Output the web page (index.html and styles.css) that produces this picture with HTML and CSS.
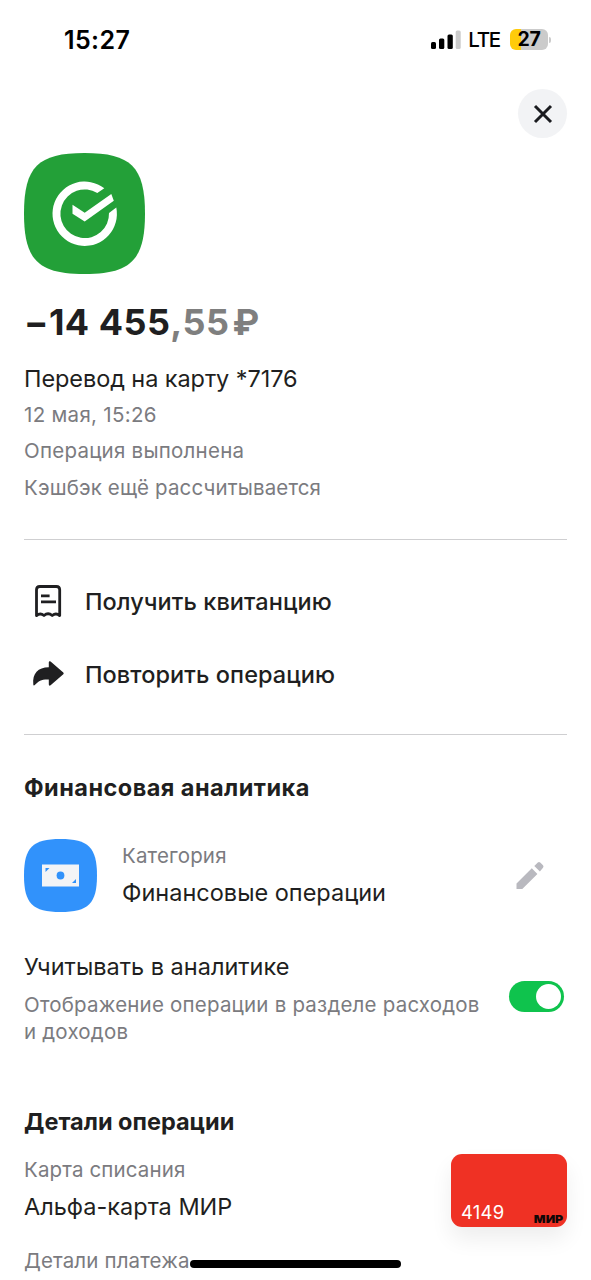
FILE: index.html
```html
<!DOCTYPE html>
<html lang="ru">
<head>
<meta charset="utf-8">
<title>Перевод на карту</title>
<link rel="stylesheet" href="styles.css">
</head>
<body>
<div class="screen">
  <header class="status">
    <span class="clock">15:27</span>
    <div class="status-right">
      <svg class="signal" width="30" height="20" viewBox="0 0 30 20"><rect x="0" y="12" width="5" height="7" rx="1.5"/><rect x="8" y="8.5" width="5.3" height="10.5" rx="1.5"/><rect x="16.5" y="4.5" width="5.3" height="14.5" rx="1.5"/><rect x="24.7" y="0.5" width="5" height="18.5" rx="1.5" fill="#cbcbcb"/></svg>
      <span class="network">LTE</span>
      <div class="battery"><span class="battery-level">27</span></div>
      <span class="battery-tip"></span>
    </div>
  </header>
  <div class="toolbar">
    <button class="close" aria-label="Закрыть"><svg width="20" height="20" viewBox="0 0 20 20"><path d="M2 2 18 18M18 2 2 18" stroke="#1a1b1f" stroke-width="3" fill="none"/></svg></button>
  </div>
  <main>
    <section class="summary">
      <svg class="merchant" width="121" height="121" viewBox="0 0 121 121">
        <path d="M0 60.5C0 14 14 0 60.5 0S121 14 121 60.5 107 121 60.5 121 0 107 0 60.5Z" fill="#23a038"/>
        <path d="M80.3 35.2A32.2 32.2 0 1 0 92.3 54.500L85 60A24.300 24.300 0 1 1 73.300 40Z" fill="#fff"/>
        <path d="M48.500 51.700 60.700 59.700 87.300 40.900 89.800 47.700 60.700 68.500 48.500 60.700Z" fill="#fff"/>
      </svg>
      <p class="amount"><span>−14 455</span><span class="cents">,55</span><span class="cents rub">₽</span></p>
      <h1 class="text title">Перевод на карту *7176</h1>
      <p class="meta date">12 мая, 15:26</p>
      <p class="meta status-line">Операция выполнена</p>
      <p class="meta">Кэшбэк ещё рассчитывается</p>
    </section>
    <section class="actions">
      <a class="action"><svg width="48" height="48" viewBox="0 0 48 48"><path d="M12.500 38.600V12.800Q12.500 9.500 15.800 9.500H32.400Q35.700 9.500 35.700 12.800V38.600Q32 35.300 28.200 38.500 24.100 35 20 38.500 16.200 35.300 12.500 38.600Z" fill="none" stroke="#1f1f21" stroke-width="2.800" stroke-linejoin="round"/><path d="M17 18.800h8.600M17 24.900H32" stroke="#1f1f21" stroke-width="2.800"/></svg>Получить квитанцию</a>
      <a class="action"><svg width="48" height="48" viewBox="0 0 48 48"><path d="M9.300 34.500C8.200 23.500 14 17.300 24.800 17.300V12.300Q25 10.500 26.600 11.600L39.300 22.400Q40.200 23.400 39.300 24.300L26.600 35.300Q25 36.300 24.800 34.500V29.500C17.500 29.200 14.600 31 11.300 34.500Q9.500 36.300 9.300 34.500Z" fill="#1f1f21"/></svg>Повторить операцию</a>
    </section>
    <section class="analytics">
      <h2 class="wide">Финансовая аналитика</h2>
      <div class="category">
        <svg width="73" height="73" viewBox="0 0 73 73"><path d="M0 36.500C0 8.500 8.500 0 36.500 0S73 8.500 73 36.500 64.500 73 36.500 73 0 64.500 0 36.500Z" fill="#3192fb"/><path d="M18 25.500H55V47.500H18Z" fill="#f3f4f6"/><circle cx="36.500" cy="36.500" r="3.900" fill="#3192fb"/><path d="M21.500 29h4l-4 4ZM52 44h-4l4-4Z" fill="#3192fb"/></svg>
        <div class="category-info"><p class="meta">Категория</p><p class="text">Финансовые операции</p></div>
        <svg class="pencil" width="32" height="32" viewBox="0 0 32 32"><path d="M2.500 29V23.500L17.800 8.300l5.600 5.600L8.300 29ZM20.300 6 23.800 2.500Q25 1.500 26.200 2.500L29 5.300Q30 6.500 29 7.700L25.900 11.400Z" fill="#b9b9bf"/></svg>
      </div>
      <div class="setting">
        <div><p class="text">Учитывать в аналитике</p><p class="hint">Отображение операции в разделе расходов<br>и доходов</p></div>
        <span class="toggle" role="switch" aria-checked="true"></span>
      </div>
    </section>
    <section class="details">
      <h2>Детали операции</h2>
      <div class="source">
        <div class="source-info"><p class="meta">Карта списания</p><p class="text">Альфа-карта МИР</p></div>
        <div class="card"><span class="digits">4149</span><span class="mir">МИР</span></div>
      </div>
      <p class="meta payment">Детали платежа</p>
    </section>
  </main>
  <div class="home"></div>
</div>
</body>
</html>
```
FILE: styles.css
```css
* { box-sizing: border-box; margin: 0; padding: 0; }
body { background: #fff; color: #1f1f21; font-family: Inter, "Liberation Sans", sans-serif; }
.screen { position: relative; width: 591px; height: 1280px; overflow: hidden; }
svg { display: block; flex: none; }
.status { display: flex; justify-content: space-between; align-items: center; height: 80px; padding: 0 40px 0 64px; color: #000; }
.clock { font-size: 25px; font-weight: 600; line-height: 30px; letter-spacing: .4px; }
.status-right { display: flex; align-items: center; }
.network { margin-left: 7px; font-size: 20.500px; font-weight: 500; line-height: 24px; letter-spacing: -1.200px; }
.battery { width: 38px; height: 21px; margin: -1px 0 0 10px; border-radius: 6px; background: linear-gradient(90deg, #ffcb0a 28%, #cbcbcb 28%); text-align: center; }
.battery-level { display: block; font-size: 19.500px; font-weight: 700; line-height: 21px; letter-spacing: -.4px; }
.battery-tip { width: 2px; height: 6px; margin: -1px 0 0 1px; border-radius: 0 2px 2px 0; background: #cbcbcb; }
.toolbar { display: flex; justify-content: flex-end; padding: 9px 24px 0 0; height: 73px; }
.close { display: flex; align-items: center; justify-content: center; width: 49px; height: 49px; border: 0; border-radius: 50%; background: #f2f3f5; }
main { padding: 0 24px; }
.summary { height: 387px; border-bottom: 1px solid #cfcfd1; }
.amount { display: flex; height: 48px; margin: 24px 0 14.500px; font-size: 36px; font-weight: 650; line-height: 48px; letter-spacing: .45px; }
.cents { color: #7f7f7f; }
.rub { margin-left: 3px; }
.text { font-size: 23.500px; font-weight: 400; line-height: 36px; white-space: nowrap; }
.title { letter-spacing: -.08px; }
.meta { font-size: 20.500px; line-height: 36.500px; letter-spacing: .14px; color: #7b7b80; white-space: nowrap; }
.date { letter-spacing: .3px; }
.status-line { letter-spacing: .24px; }
.actions { height: 195px; padding-top: 37px; border-bottom: 1px solid #cfcfd1; }
.action { display: flex; align-items: center; gap: 13px; height: 48px; margin-bottom: 25px; font-size: 23.500px; font-weight: 500; letter-spacing: .08px; white-space: nowrap; }
.analytics { height: 350px; padding-top: 35px; }
h2 { font-size: 23.500px; font-weight: 700; line-height: 36px; }
.wide { letter-spacing: .46px; }
.category { display: flex; align-items: center; margin-top: 33px; height: 73px; }
.category-info { flex: 1; margin: -2px 0 0 25px; }
.pencil { margin-right: 21px; }
.setting { display: flex; justify-content: space-between; align-items: center; margin-top: 37px; padding-right: 3px; }
.hint { margin-top: 6px; font-size: 20.500px; line-height: 27px; letter-spacing: .2px; color: #7b7b80; white-space: nowrap; }
.toggle { display: flex; justify-content: flex-end; width: 55px; height: 31px; margin-top: -1px; padding: 3px; border-radius: 16px; background: #0fc34d; }
.toggle::after { content: ""; width: 25px; height: 25px; border-radius: 50%; background: #fff; }
.details { padding-top: 19px; }
.source { display: flex; justify-content: space-between; align-items: flex-start; margin-top: 11px; }
.source-info { margin-top: 1px; }
.card { display: flex; justify-content: space-between; align-items: flex-end; width: 116px; height: 73px; margin-top: 3px; padding: 0 4px 2px 10px; border-radius: 11px; background: #ef3124; box-shadow: 0 12px 22px rgba(0,0,0,.07); }
.digits { font-size: 18.500px; line-height: 26px; letter-spacing: .2px; color: #fff; }
.mir { font-size: 11px; font-weight: 900; line-height: 11px; color: #120707; transform: scaleX(1.12); transform-origin: right; }
.payment { margin-top: 16px; }
.home { position: absolute; left: 190px; top: 1260px; width: 211px; height: 8px; border-radius: 4px; background: #000; }
```
